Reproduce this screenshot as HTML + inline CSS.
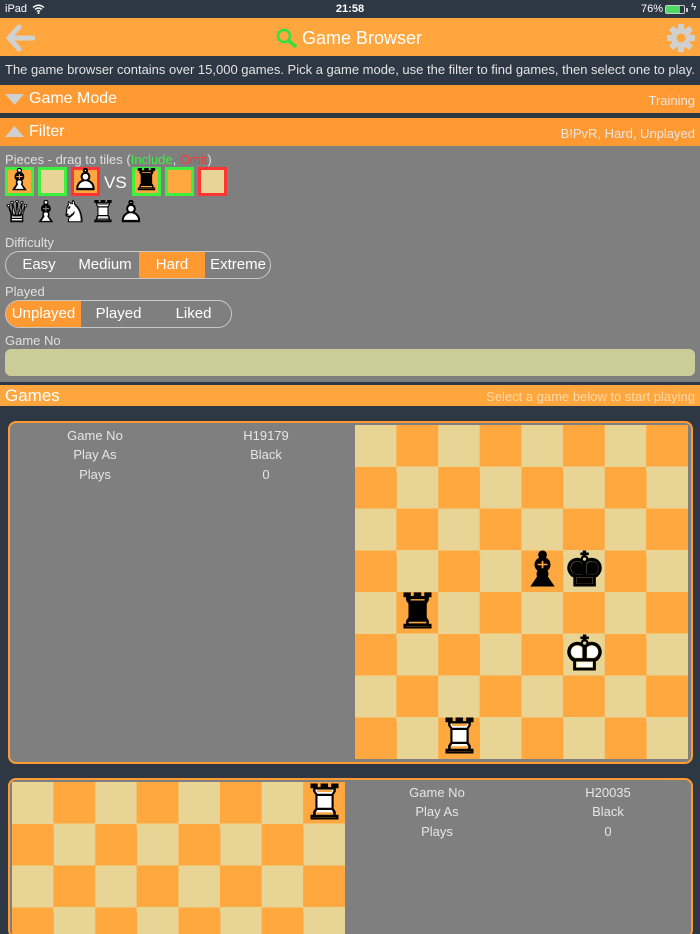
<!DOCTYPE html>
<html><head><meta charset="utf-8"><style>
*{margin:0;padding:0;box-sizing:border-box}
html,body{width:700px;height:934px;overflow:hidden}
body{background:#2e3744;font-family:"Liberation Sans","DejaVu Sans",sans-serif;position:relative;color:#fff}
.a{position:absolute}
.bar{position:absolute;left:0;width:700px;background:#ff9a33;font-size:16px}
.lbl{color:#e0e0e0;font-size:13px}
.tile{position:absolute;top:167px;width:29px;height:29px;border:3px solid #3ef03e}
.pc{position:absolute;font-family:"DejaVu Sans",sans-serif;line-height:1;text-align:center}
.pc .w{position:absolute;left:0;top:0;color:#fff}
.pc .o{position:absolute;left:0;top:0;color:#000}
.seg{position:absolute;border:1px solid #c8c8c8;border-radius:14px;overflow:hidden;height:28px;font-size:15px}
.seg span{position:absolute;top:0;height:26px;line-height:26px;text-align:center}
.card{position:absolute;border:2px solid #ff9a33;border-radius:8px;background:#7f7f7f;overflow:hidden}
.board{position:absolute;width:333px;height:334px;background:conic-gradient(#ffa83f 25%,#e8d596 0 50%,#ffa83f 0 75%,#e8d596 0);background-size:83.25px 83.5px}
.inf{position:absolute;font-size:13px;color:#e6e6e6;text-align:center;width:160px}
.bp{font-size:48px;width:42px}
.bp span{width:42px;-webkit-text-stroke:1px #000}
.bp .w{-webkit-text-stroke:0}
.sm span{-webkit-text-stroke:0.5px #000}
.sm .w{-webkit-text-stroke:0}
</style></head><body>
<div class="a" style="left:5px;top:3px;font-size:11px;color:#fff">iPad</div>
<svg class="a" style="left:32px;top:4px" width="13" height="10" viewBox="0 0 13 10"><path d="M1 3.5Q6.5-1 12 3.5M3 5.5Q6.5 2.5 10 5.5M5 7.5Q6.5 6 8 7.5" stroke="#fff" stroke-width="1.4" fill="none"/><circle cx="6.5" cy="9" r="1" fill="#fff"/></svg>
<div class="a" style="left:0;width:700px;top:3px;text-align:center;font-size:11px;font-weight:bold">21:58</div>
<div class="a" style="left:641px;top:3px;font-size:11px">76%</div>
<div class="a" style="left:665px;top:5px;width:20px;height:9px;border:1px solid #ccc;border-radius:2px"><div style="width:14px;height:7px;background:#4cd964"></div></div>
<div class="a" style="left:686px;top:8px;width:2px;height:4px;background:#ccc"></div>
<div class="a" style="left:691px;top:2px;font-size:10px">ϟ</div>
<div class="a" style="left:0;top:18px;width:700px;height:38px;background:#ffa73e"></div>
<svg class="a" style="left:5px;top:24px" width="30" height="28" viewBox="0 0 30 28"><path d="M14 3L4 14L14 25M4 14H28" stroke="#d0d0d0" stroke-width="5" fill="none" stroke-linecap="round" stroke-linejoin="round"/></svg>
<svg class="a" style="left:276px;top:28px" width="22" height="20" viewBox="0 0 22 20"><circle cx="8" cy="8" r="6" stroke="#33e040" stroke-width="2.5" fill="none"/><path d="M12.5 12.5L19 18" stroke="#33e040" stroke-width="3.5" stroke-linecap="round"/></svg>
<div class="a" style="left:302px;top:28px;font-size:18px">Game Browser</div>
<svg class="a" style="left:666px;top:23px" width="30" height="30" viewBox="0 0 30 30"><g fill="#d0d0d0"><circle cx="15" cy="15" r="10"/><g id="t"><rect x="12" y="1" width="6" height="28" rx="1"/></g><use href="#t" transform="rotate(45 15 15)"/><use href="#t" transform="rotate(90 15 15)"/><use href="#t" transform="rotate(135 15 15)"/></g><circle cx="15" cy="15" r="4.5" fill="#ffa73e"/></svg>
<div class="a" style="left:5px;top:62px;font-size:13px;color:#e4e4e4">The game browser contains over 15,000 games. Pick a game mode, use the filter to find games, then select one to play.</div>
<div class="bar" style="top:85px;height:28px"></div>
<svg class="a" style="left:5px;top:94px" width="19" height="11"><path d="M0 0H19L9.5 11Z" fill="#d0d0d0"/></svg>
<div class="a" style="left:29px;top:90px;font-size:16px">Game Mode</div>
<div class="a" style="right:5px;top:93px;font-size:13px;color:#e6e6e6">Training</div>
<div class="bar" style="top:118px;height:28px"></div>
<svg class="a" style="left:5px;top:126px" width="19" height="11"><path d="M0 11H19L9.5 0Z" fill="#d0d0d0"/></svg>
<div class="a" style="left:29px;top:123px;font-size:16px">Filter</div>
<div class="a" style="right:5px;top:126px;font-size:13px;color:#e6e6e6">B!PvR, Hard, Unplayed</div>
<div class="a" style="left:0;top:146px;width:700px;height:236px;background:#7f7f7f"></div>
<div class="a lbl" style="left:5px;top:152px">Pieces - drag to tiles (<span style="color:#3ef03e">Include</span>, <span style="color:#ff3535">Omit</span>)</div>
<div class="tile" style="left:5px;background:#ffa83f"></div>
<div class="tile" style="left:38px;background:#e8d596"></div>
<div class="tile" style="left:71px;background:#ffa83f;border-color:#ff3535"></div>
<div class="a" style="left:104px;top:173px;font-size:17px">VS</div>
<div class="tile" style="left:132px;background:#ffa83f"></div>
<div class="tile" style="left:165px;background:#ffa83f"></div>
<div class="tile" style="left:198px;background:#e8d596;border-color:#ff3535"></div>
<div class="pc sm" style="left:5px;top:166px;font-size:30px"><span class="w" style="width:29px">♝</span><span class="o" style="width:29px">♗</span></div>
<div class="pc sm" style="left:71px;top:166px;font-size:30px"><span class="w" style="width:29px">♟</span><span class="o" style="width:29px">♙</span></div>
<div class="pc sm" style="left:132px;top:166px;font-size:30px"><span class="o" style="width:29px">♜</span></div>
<div class="pc sm" style="left:3px;top:198px;font-size:30px"><span class="w" style="width:28px">♛</span><span class="o" style="width:28px">♕</span></div>
<div class="pc sm" style="left:32px;top:198px;font-size:30px"><span class="w" style="width:28px">♝</span><span class="o" style="width:28px">♗</span></div>
<div class="pc sm" style="left:60px;top:198px;font-size:30px"><span class="w" style="width:28px">♞</span><span class="o" style="width:28px">♘</span></div>
<div class="pc sm" style="left:89px;top:198px;font-size:30px"><span class="w" style="width:28px">♜</span><span class="o" style="width:28px">♖</span></div>
<div class="pc sm" style="left:117px;top:198px;font-size:30px"><span class="w" style="width:28px">♟</span><span class="o" style="width:28px">♙</span></div>
<div class="a lbl" style="left:5px;top:235px">Difficulty</div>
<div class="seg" style="left:5px;top:251px;width:266px">
<span style="left:0;width:66px">Easy</span><span style="left:66px;width:66px">Medium</span><span style="left:133px;width:66px;background:#ff9a33">Hard</span><span style="left:199px;width:66px">Extreme</span></div>
<div class="a lbl" style="left:5px;top:284px">Played</div>
<div class="seg" style="left:5px;top:300px;width:227px">
<span style="left:0;width:75px;background:#ff9a33">Unplayed</span><span style="left:75px;width:75px">Played</span><span style="left:150px;width:75px">Liked</span></div>
<div class="a lbl" style="left:5px;top:333px">Game No</div>
<div class="a" style="left:5px;top:349px;width:690px;height:27px;background:#cccc99;border-radius:6px"></div>
<div class="a" style="left:0;top:385px;width:700px;height:21px;background:#ffa73e"></div>
<div class="a" style="left:5px;top:386px;font-size:17px">Games</div>
<div class="a" style="right:5px;top:389px;font-size:13px;color:#ffd9a8">Select a game below to start playing</div>
<div class="card" style="left:8px;top:421px;width:685px;height:343px">
<div class="inf" style="left:5px;top:5px">Game No</div><div class="inf" style="left:176px;top:5px">H19179</div>
<div class="inf" style="left:5px;top:24px">Play As</div><div class="inf" style="left:176px;top:24px">Black</div>
<div class="inf" style="left:5px;top:44px">Plays</div><div class="inf" style="left:176px;top:44px">0</div>
<div class="board" style="left:345px;top:2px">
<div class="pc bp" style="left:166px;top:121px"><span class="o">♝</span></div>
<div class="pc bp" style="left:208px;top:121px"><span class="o">♚</span></div>
<div class="pc bp" style="left:41px;top:163px"><span class="o">♜</span></div>
<div class="pc bp" style="left:208px;top:205px"><span class="w">♚</span><span class="o">♔</span></div>
<div class="pc bp" style="left:83px;top:288px"><span class="w">♜</span><span class="o">♖</span></div>
</div>
</div>
<div class="card" style="left:8px;top:778px;width:685px;height:160px">
<div class="board" style="left:2px;top:2px">
<div class="pc bp" style="left:291px;top:-3px"><span class="w">♜</span><span class="o">♖</span></div>
</div>
<div class="inf" style="left:347px;top:5px">Game No</div><div class="inf" style="left:518px;top:5px">H20035</div>
<div class="inf" style="left:347px;top:24px">Play As</div><div class="inf" style="left:518px;top:24px">Black</div>
<div class="inf" style="left:347px;top:44px">Plays</div><div class="inf" style="left:518px;top:44px">0</div>
</div>
</body></html>
